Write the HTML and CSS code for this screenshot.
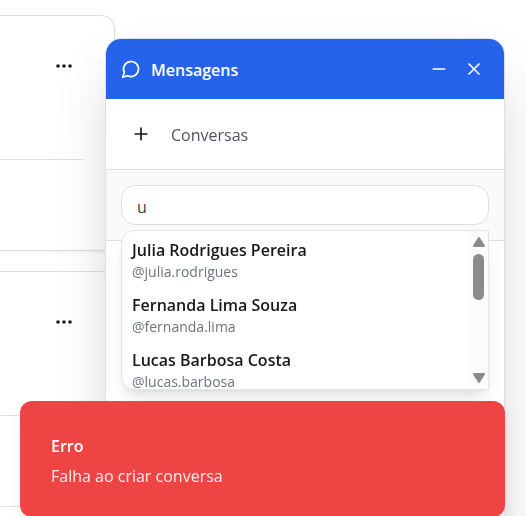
FILE: index.html
```html
<!DOCTYPE html>
<html lang="pt-BR">
<head>
<meta charset="utf-8">
<meta name="viewport" content="width=device-width, initial-scale=1">
<title>Mensagens</title>
<link rel="stylesheet" href="styles.css">
</head>
<body>
<main class="feed">
  <article class="card">
    <header class="card-header">
      <button class="icon-button" type="button" aria-label="Mais opções">
        <svg width="20" height="20" viewBox="0 0 20 20" fill="#1c1c1f"><circle cx="4" cy="10" r="1.8"/><circle cx="10" cy="10" r="1.8"/><circle cx="16" cy="10" r="1.8"/></svg>
      </button>
    </header>
  </article>
  <article class="card">
    <header class="card-header">
      <button class="icon-button" type="button" aria-label="Mais opções">
        <svg width="20" height="20" viewBox="0 0 20 20" fill="#1c1c1f"><circle cx="4" cy="10" r="1.8"/><circle cx="10" cy="10" r="1.8"/><circle cx="16" cy="10" r="1.8"/></svg>
      </button>
    </header>
  </article>
</main>

<section class="chat" aria-label="Mensagens">
  <header class="chat-header">
    <svg width="20" height="20" viewBox="0 0 24 24" fill="none" stroke="currentColor" stroke-width="2" stroke-linecap="round" stroke-linejoin="round"><path d="M7.9 20A9 9 0 1 0 4 16.1L2 22Z"/></svg>
    <h2 class="chat-title">Mensagens</h2>
    <button class="icon-button" type="button" aria-label="Minimizar">
      <svg width="20" height="20" viewBox="0 0 24 24" fill="none" stroke="currentColor" stroke-width="2" stroke-linecap="round"><path d="M5 12h14"/></svg>
    </button>
    <button class="icon-button" type="button" aria-label="Fechar">
      <svg width="20" height="20" viewBox="0 0 24 24" fill="none" stroke="currentColor" stroke-width="2" stroke-linecap="round"><path d="M18 6 6 18M6 6l12 12"/></svg>
    </button>
  </header>
  <div class="chat-toolbar">
    <button class="icon-button" type="button" aria-label="Nova conversa">
      <svg width="20" height="20" viewBox="0 0 24 24" fill="none" stroke="currentColor" stroke-width="2" stroke-linecap="round"><path d="M5 12h14M12 5v14"/></svg>
    </button>
    <span class="toolbar-label">Conversas</span>
  </div>
  <div class="chat-search">
    <input class="search-input" type="text" value="u" aria-label="Buscar usuário">
    <div class="results">
      <ul class="results-list">
        <li class="result"><span class="result-name">Julia Rodrigues Pereira</span><span class="result-handle">@julia.rodrigues</span></li>
        <li class="result"><span class="result-name">Fernanda Lima Souza</span><span class="result-handle">@fernanda.lima</span></li>
        <li class="result"><span class="result-name">Lucas Barbosa Costa</span><span class="result-handle">@lucas.barbosa</span></li>
      </ul>
      <div class="scroll-track" aria-hidden="true">
        <svg width="14" height="12" viewBox="0 0 14 12"><path d="M7 2 12 10H2Z" fill="#8b8b8b" stroke="#8b8b8b" stroke-width="2" stroke-linejoin="round"/></svg>
        <div class="scroll-thumb"></div>
        <svg class="scroll-down" width="14" height="12" viewBox="0 0 14 12"><path d="M7 10 2 2h10Z" fill="#8b8b8b" stroke="#8b8b8b" stroke-width="2" stroke-linejoin="round"/></svg>
      </div>
    </div>
  </div>
</section>

<div class="toast" role="alert">
  <strong class="toast-title">Erro</strong>
  <span class="toast-text">Falha ao criar conversa</span>
</div>
</body>
</html>
```
FILE: styles.css
```css
* {
  box-sizing: border-box;
}

body {
  margin: 0;
  background: #fff;
  color: #18181b;
  font: 16px/24px "Open Sans", "Noto Sans", sans-serif;
  overflow: hidden;
}

.icon-button {
  display: flex;
  padding: 0;
  border: 0;
  background: none;
  color: inherit;
}

.feed {
  display: flex;
  flex-direction: column;
  gap: 20px;
  margin-right: 411px;
  padding-top: 15px;
}

.card {
  min-height: 236px;
  padding-right: 30px;
  border: 1px solid #dedfe2;
  border-left: 0;
  border-radius: 0 14px 14px 0;
  box-shadow: 0 1px 3px rgba(0, 0, 0, 0.08);
}

.card-header {
  display: flex;
  justify-content: flex-end;
  min-height: 144px;
  padding: 40px 10px;
  border-bottom: 1px solid #dedfe2;
}

.card-header .icon-button {
  align-self: flex-start;
}

.chat {
  position: fixed;
  top: 38px;
  right: 21px;
  bottom: -150px;
  width: 400px;
  border: 1px solid #dedfe2;
  border-radius: 16px;
  background: #fff;
  box-shadow: 0 31px 62px -15px rgba(0, 0, 0, 0.25);
}

.chat-header {
  display: flex;
  align-items: center;
  gap: 15px;
  height: 60px;
  padding: 0 20px 0 15px;
  border-radius: 15px 15px 0 0;
  background: #2563eb;
  color: #fff;
}

.chat-title {
  flex: 1;
  margin: 0 0 0 -5px;
  padding-top: 2px;
  font-size: 16px;
  font-weight: 600;
}

.chat-toolbar {
  display: flex;
  align-items: center;
  gap: 20px;
  height: 71px;
  padding: 0 25px;
  border-bottom: 1px solid #dedfe2;
}

.toolbar-label {
  padding-top: 2px;
  color: #4b5563;
}

.chat-search {
  position: relative;
  padding: 15px;
  border-bottom: 1px solid #dedfe2;
  background: #f9fafb;
}

.search-input {
  display: block;
  width: 100%;
  height: 40px;
  padding: 4px 15px 0;
  border: 1px solid #dedfe2;
  border-radius: 14px;
  outline: 0;
  background: #fff;
  color: #3f3f46;
  font: inherit;
}

.results {
  position: absolute;
  top: 60px;
  left: 15px;
  right: 15px;
  display: flex;
  height: 160px;
  border: 1px solid #e4e4e7;
  border-radius: 14px 0 0 14px;
  background: #fff;
  box-shadow: 0 12px 19px -4px rgba(0, 0, 0, 0.1), 0 5px 8px -5px rgba(0, 0, 0, 0.1);
  overflow: hidden;
}

.results-list {
  flex: 1;
  margin: 0;
  padding: 0;
  list-style: none;
  overflow: auto;
  scrollbar-width: none;
}

.result {
  display: flex;
  flex-direction: column;
  gap: 2px;
  padding: 7px 10px 6px;
}

.result-name {
  font-weight: 600;
}

.result-handle {
  color: #6b7280;
  font-size: 14px;
  line-height: 16px;
}

.scroll-track {
  display: flex;
  flex-direction: column;
  align-items: center;
  gap: 6px;
  width: 19px;
  padding: 5px 0;
  background: #fcfcfc;
}

.scroll-thumb {
  width: 11px;
  height: 46px;
  border-radius: 6px;
  background: #8b8b8b;
}

.scroll-down {
  margin-top: auto;
}

.toast {
  position: fixed;
  top: 401px;
  left: 20px;
  right: 21px;
  display: flex;
  flex-direction: column;
  gap: 6px;
  padding: 33px 31px 29px;
  border-radius: 12px;
  background: #ef4444;
  box-shadow: 0 12px 19px -4px rgba(0, 0, 0, 0.1), 0 5px 8px -5px rgba(0, 0, 0, 0.1);
  color: #fff;
}

.toast-title {
  font-weight: 600;
}

.toast-text {
  opacity: 0.9;
}
```
